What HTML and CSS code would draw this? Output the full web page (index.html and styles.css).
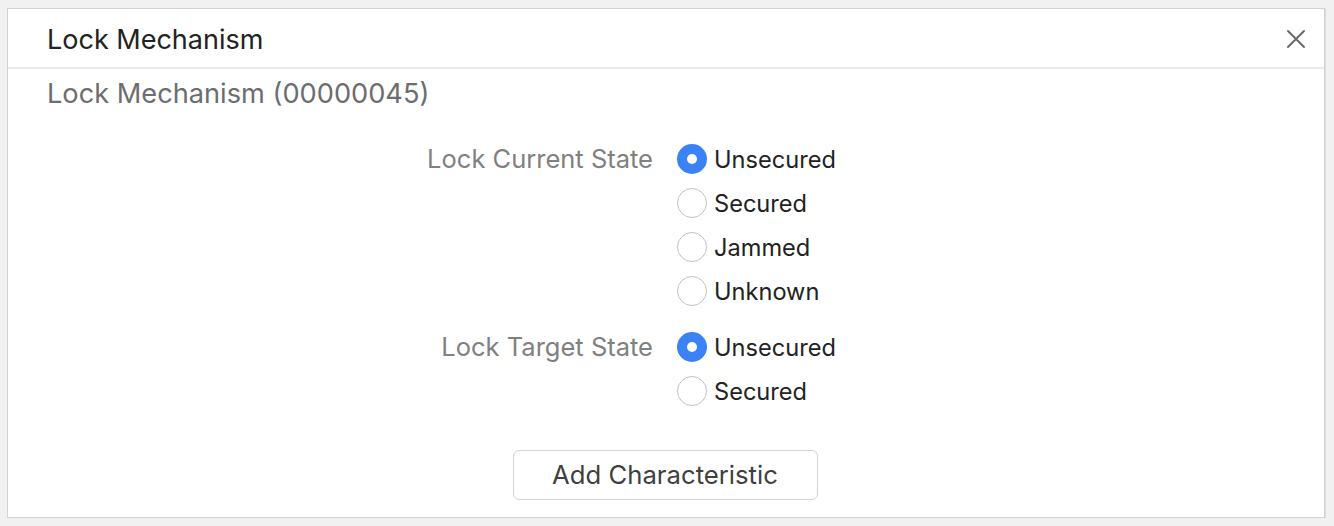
FILE: index.html
```html
<!DOCTYPE html>
<html>
<head>
<meta charset="utf-8">
<link rel="stylesheet" href="styles.css">
</head>
<body>
<div class="panel">
  <div class="panel-header">
    <div class="title">Lock Mechanism</div>
    <button class="close" aria-label="Close">
      <svg width="20" height="20" viewBox="0 0 20 20"><path d="M2 2 L18 18 M18 2 L2 18" stroke="#6a6a6a" stroke-width="2" stroke-linecap="round" fill="none"/></svg>
    </button>
  </div>
  <div class="panel-body">
    <div class="subtitle">Lock Mechanism (00000045)</div>
    <div class="form">
      <div class="group">
        <div class="label">Lock Current State</div>
        <div class="options">
          <label class="option"><span class="radio checked"></span><span>Unsecured</span></label>
          <label class="option"><span class="radio"></span><span>Secured</span></label>
          <label class="option"><span class="radio"></span><span>Jammed</span></label>
          <label class="option"><span class="radio"></span><span>Unknown</span></label>
        </div>
      </div>
      <div class="group">
        <div class="label">Lock Target State</div>
        <div class="options">
          <label class="option"><span class="radio checked"></span><span>Unsecured</span></label>
          <label class="option"><span class="radio"></span><span>Secured</span></label>
        </div>
      </div>
    </div>
    <div class="actions">
      <button class="add">Add Characteristic</button>
    </div>
  </div>
</div>
</body>
</html>
```

FILE: styles.css
```css
html, body {
  margin: 0;
  padding: 0;
  background: #f1f1f1;
  font-family: Inter, "Liberation Sans", Arial, sans-serif;
}
body {
  padding: 8px 8px 0 7px;
}
.panel {
  width: 1316px;
  height: 508px;
  background: #fff;
  border: 1px solid #d2d2d2;
  box-shadow: 1px 1px 0 #dcdcdc;
  display: flex;
  flex-direction: column;
}
.panel-header {
  height: 60px;
  border-bottom: 2px solid #e9e9e9;
  display: flex;
  align-items: center;
  justify-content: space-between;
  padding: 0 18px 0 39px;
  box-sizing: border-box;
  flex: none;
}
.title {
  font-size: 27px;
  color: #222;
  margin-top: 2px;
}
.close {
  border: none;
  background: none;
  padding: 0;
  width: 20px;
  height: 20px;
  display: flex;
  align-items: center;
  justify-content: center;
  margin-top: 2px;
}
.panel-body {
  padding: 0 39px;
  display: flex;
  flex-direction: column;
}
.subtitle {
  font-size: 27.2px;
  color: #6d6d6d;
  height: 50px;
  line-height: 50px;
}
.form {
  display: flex;
  flex-direction: column;
  gap: 12px;
  padding-top: 18px;
}
.group {
  display: grid;
  grid-template-columns: 1fr 1fr;
  column-gap: 24px;
  padding-right: 2px;
}
.label {
  text-align: right;
  font-size: 25.5px;
  color: #808080;
  line-height: 44px;
}
.options {
  display: flex;
  flex-direction: column;
}
.option {
  height: 44px;
  display: flex;
  align-items: center;
  gap: 7px;
  font-size: 23.6px;
  color: #222;
}
.radio {
  width: 30px;
  height: 30px;
  box-sizing: border-box;
  border-radius: 50%;
  border: 1px solid #c2c2c2;
  background: #fff;
  flex: none;
  position: relative;
}
.radio.checked {
  border: none;
  background: #3b82f6;
}
.radio.checked::after {
  content: "";
  position: absolute;
  left: 10px;
  top: 10px;
  width: 10px;
  height: 10px;
  border-radius: 50%;
  background: #fff;
}
.actions {
  display: flex;
  justify-content: center;
  padding-top: 37px;
}
.add {
  width: 305px;
  height: 50px;
  border: 1px solid #d3d3d3;
  border-radius: 6px;
  background: #fff;
  font-family: Inter, "Liberation Sans", Arial, sans-serif;
  font-size: 25.7px;
  color: #3f3f3f;
  margin-left: -2px;
  padding-bottom: 3px;
}
```
